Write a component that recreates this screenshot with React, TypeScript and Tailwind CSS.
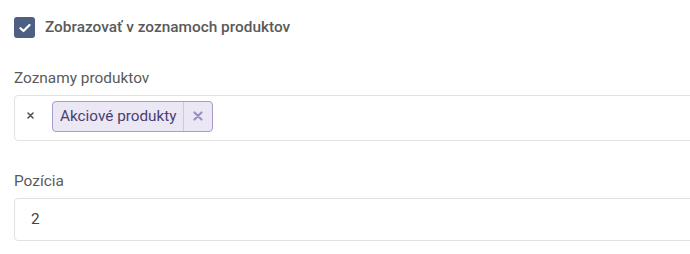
import React from "react";

export default function App() {
  return (
    <div className="w-[690px] h-[254px] overflow-hidden bg-white" style={{ fontFamily: "Roboto, 'Liberation Sans', sans-serif" }}>
      <div className="w-[740px] pl-[14px] pt-[17px]">
        <label className="flex items-center gap-[10px] h-[21px]">
          <span className="w-[21px] h-[21px] rounded-[3px] bg-[#4d5f82] flex items-center justify-center">
            <svg width="12" height="10" viewBox="0 0 12 10" fill="none">
              <path d="M1.5 5.2 L4.5 8 L10.5 2" stroke="white" strokeWidth="2.2" strokeLinecap="round" strokeLinejoin="round" />
            </svg>
          </span>
          <span className="text-[15.4px] font-medium text-[#5a5a5a] leading-none">Zobrazovať v zoznamoch produktov</span>
        </label>

        <div className="mt-[30px] text-[15.4px] text-[#5a5a5a] leading-[20px]">Zoznamy produktov</div>
        <div className="mt-[7px] h-[46px] border border-[#e2e2e2] rounded-[4px] flex items-center pl-[12px]">
          <span className="w-[25px] -mt-[6px] flex">
            <svg width="7" height="7" viewBox="0 0 7 7">
              <path d="M1 1 L6 6 M6 1 L1 6" stroke="#555" strokeWidth="1.6" strokeLinecap="round" />
            </svg>
          </span>
          <span className="h-[31px] flex items-stretch border border-[#a99bcc] bg-[#ebe7f5] rounded-[4px] text-[#4a3f6e] text-[15.3px] -mt-[4px]">
            <span className="pl-[7px] pr-[6px] flex items-center">Akciové produkty</span>
            <span className="border-l border-[#cfc7e3] w-[29px] flex items-center justify-center">
              <svg width="10" height="10" viewBox="0 0 10 10">
                <path d="M1.5 1.5 L8.5 8.5 M8.5 1.5 L1.5 8.5" stroke="#9d8fc4" strokeWidth="2.2" strokeLinecap="round" />
              </svg>
            </span>
          </span>
        </div>

        <div className="mt-[30px] text-[15.4px] text-[#5a5a5a] leading-[20px]">Pozícia</div>
        <div className="mt-[7px] h-[43px] border border-[#e2e2e2] rounded-[4px] flex items-center pl-[16px] text-[15.4px] text-[#444]">
          2
        </div>
      </div>
    </div>
  );
}
